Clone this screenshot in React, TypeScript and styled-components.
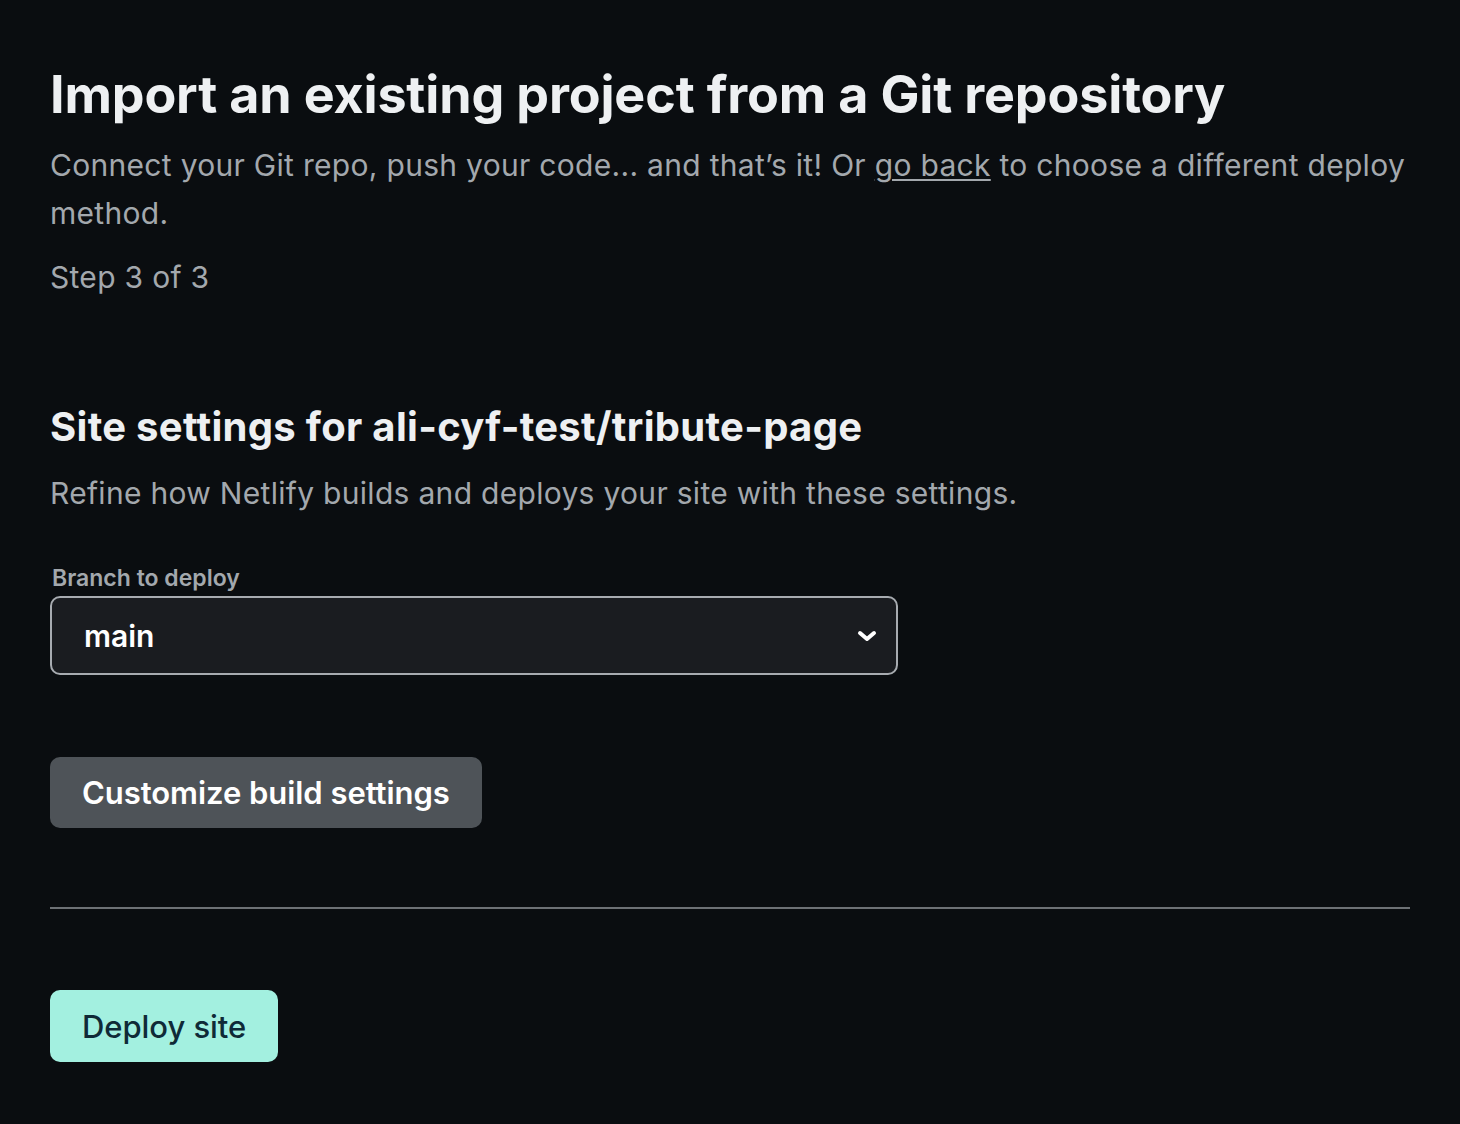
import React from "react";
import styled, { createGlobalStyle } from "styled-components";

const GlobalStyle = createGlobalStyle`
  html, body {
    margin: 0;
    padding: 0;
    background: #0a0d10;
  }
  body {
    font-family: Inter, "Noto Sans", "Liberation Sans", sans-serif;
    -webkit-font-smoothing: antialiased;
  }
`;

const Page = styled.main`
  min-height: 1124px;
  box-sizing: border-box;
  padding: 62px 50px 0 50px;
  color: #eceef0;
`;

const Title = styled.h1`
  margin: 0;
  font-size: 52px;
  line-height: 66px;
  font-weight: 700;
  letter-spacing: -0.15px;
  color: #eef0f2;
`;

const Lead = styled.p<{ $gap?: number }>`
  margin: ${(p) => p.$gap ?? 13}px 0 0;
  font-size: 30px;
  line-height: 48px;
  color: #a3a8ad;
  letter-spacing: 0.3px;
`;

const BackLink = styled.a`
  color: #a3a8ad;
  text-decoration: underline;
  text-underline-offset: 3px;
  text-decoration-thickness: 2px;
`;

const Step = styled.p`
  margin: 16px 0 0;
  font-size: 30px;
  line-height: 48px;
  color: #a3a8ad;
  letter-spacing: 0.3px;
`;

const Section = styled.section`
  margin-top: 100px;
`;

const SectionTitle = styled.h2`
  margin: 0;
  font-size: 40px;
  line-height: 52px;
  font-weight: 700;
  letter-spacing: 0.3px;
  color: #eef0f2;
`;

const Field = styled.div`
  margin-top: 47px;
  display: flex;
  flex-direction: column;
  gap: 4px;
  width: 848px;
`;

const Label = styled.label`
  font-size: 23px;
  line-height: 28px;
  font-weight: 600;
  color: #a3a8ad;
  padding-left: 2px;
`;

const SelectBox = styled.div`
  height: 79px;
  box-sizing: border-box;
  border: 2px solid #a7abb0;
  border-radius: 10px;
  background: #1a1c20;
  display: flex;
  align-items: center;
  justify-content: space-between;
  padding: 0 18px 0 32px;
  font-size: 30px;
  font-weight: 600;
  color: #ffffff;
`;

const Button = styled.button<{ $primary?: boolean }>`
  border: 0;
  border-radius: 10px;
  height: ${(p) => (p.$primary ? 72 : 71)}px;
  padding: 0 32px;
  font-family: inherit;
  font-size: 31px;
  font-weight: ${(p) => (p.$primary ? 500 : 600)};
  letter-spacing: -0.05px;
  background: ${(p) => (p.$primary ? "#a3f0e0" : "#4e5358")};
  color: ${(p) => (p.$primary ? "#0f2a37" : "#ffffff")};
  cursor: pointer;
`;

const ButtonRow = styled.div`
  margin-top: 82px;
  display: flex;
`;

const Divider = styled.hr`
  margin: 79px 0 0;
  border: 0;
  border-top: 2px solid #6d7175;
  width: 1360px;
`;

const DeployRow = styled.div`
  margin-top: 81px;
  display: flex;
`;

const Chevron = () => (
  <svg width="22" height="14" viewBox="0 0 22 14" fill="none">
    <path
      d="M4 4l7 6 7-6"
      stroke="#ffffff"
      strokeWidth="4"
      strokeLinecap="round"
      strokeLinejoin="round"
    />
  </svg>
);

export default function App() {
  return (
    <>
      <GlobalStyle />
      <Page>
        <Title>Import an existing project from a Git repository</Title>
        <Lead>
          Connect your Git repo, push your code... and that’s it! Or{" "}
          <BackLink href="#">go back</BackLink> to choose a different deploy
          method.
        </Lead>
        <Step>Step 3 of 3</Step>

        <Section>
          <SectionTitle>Site settings for ali-cyf-test/tribute-page</SectionTitle>
          <Lead $gap={16}>
            Refine how Netlify builds and deploys your site with these settings.
          </Lead>

          <Field>
            <Label>Branch to deploy</Label>
            <SelectBox>
              <span>main</span>
              <Chevron />
            </SelectBox>
          </Field>

          <ButtonRow>
            <Button>Customize build settings</Button>
          </ButtonRow>
        </Section>

        <Divider />

        <DeployRow>
          <Button $primary>Deploy site</Button>
        </DeployRow>
      </Page>
    </>
  );
}
